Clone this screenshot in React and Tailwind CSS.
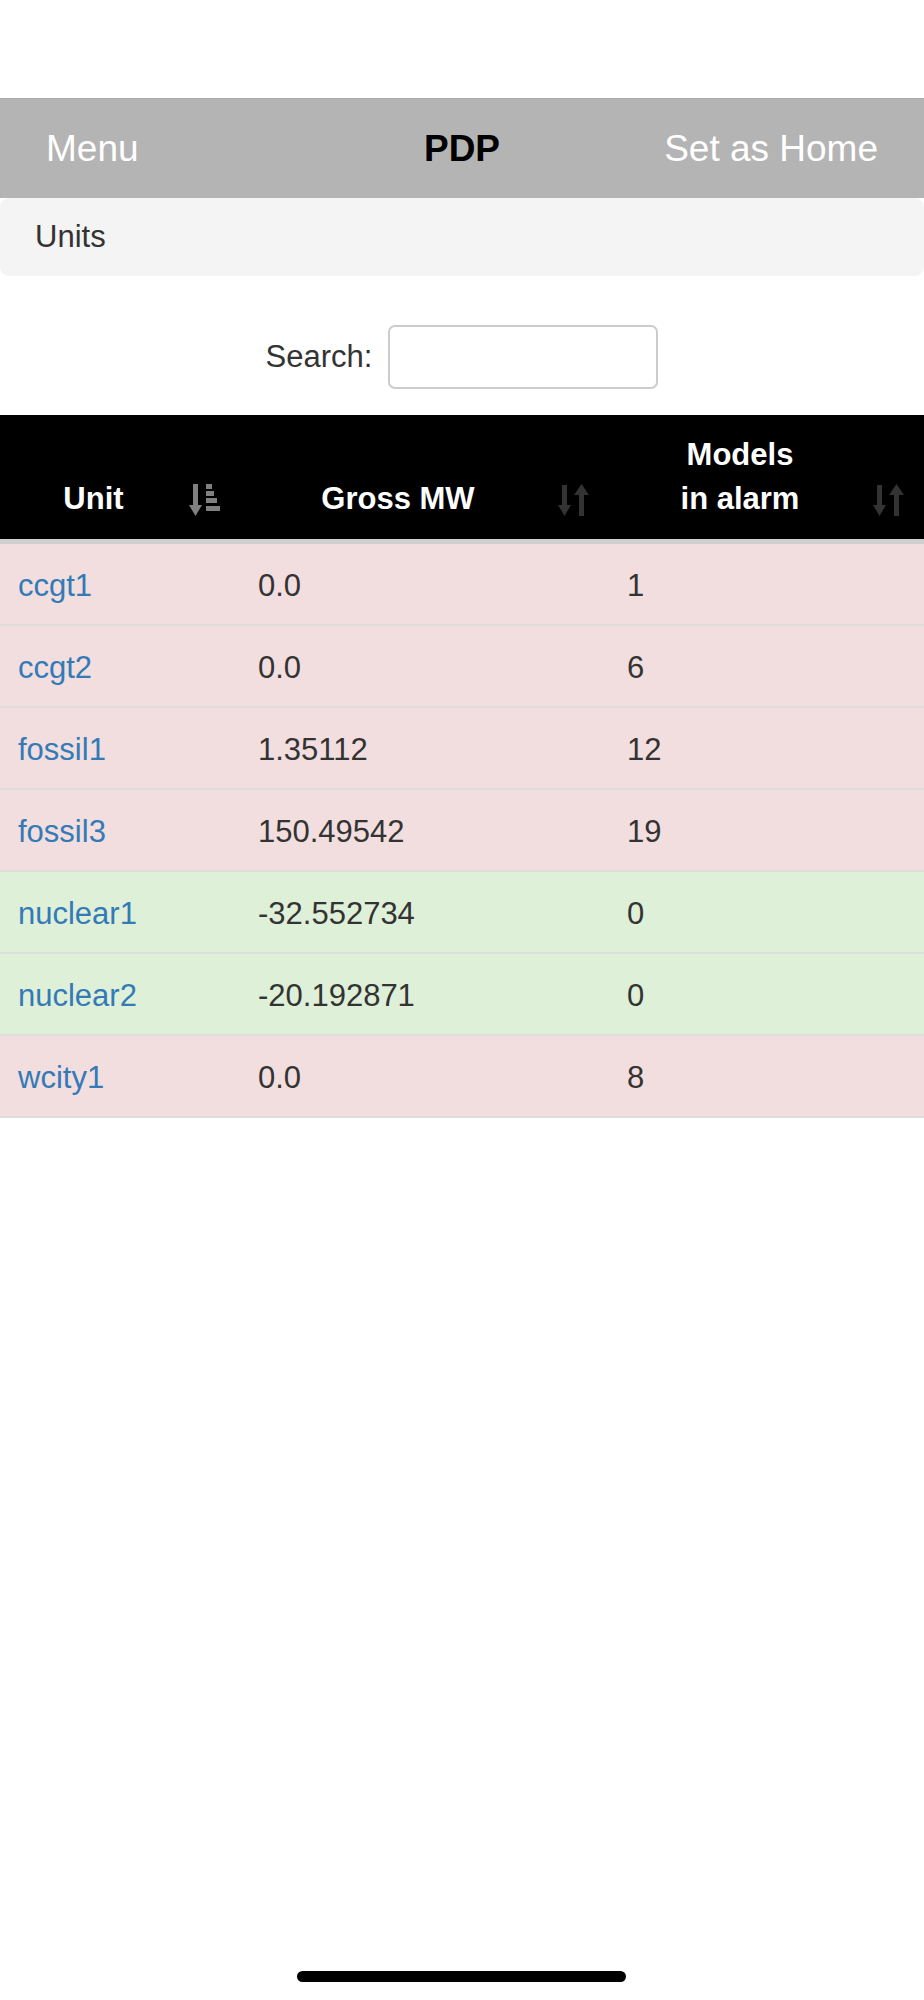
import React from "react";

const rows = [
  { unit: "ccgt1", mw: "0.0", alarms: "1", ok: false },
  { unit: "ccgt2", mw: "0.0", alarms: "6", ok: false },
  { unit: "fossil1", mw: "1.35112", alarms: "12", ok: false },
  { unit: "fossil3", mw: "150.49542", alarms: "19", ok: false },
  { unit: "nuclear1", mw: "-32.552734", alarms: "0", ok: true },
  { unit: "nuclear2", mw: "-20.192871", alarms: "0", ok: true },
  { unit: "wcity1", mw: "0.0", alarms: "8", ok: false },
];

function SortAsc() {
  return (
    <svg width="32" height="32" viewBox="0 0 32 32" fill="currentColor">
      <rect x="4" y="0" width="5" height="22" />
      <polygon points="0,21 13,21 6.5,32" />
      <rect x="17" y="0" width="6" height="5" />
      <rect x="17" y="7" width="8" height="5" />
      <rect x="17" y="14" width="11" height="5" />
      <rect x="17" y="22" width="14" height="5" />
    </svg>
  );
}

function SortBoth() {
  return (
    <svg width="32" height="32" viewBox="0 0 32 32" fill="currentColor">
      <rect x="4" y="1" width="5" height="21" />
      <polygon points="0,21 13,21 6.5,32" />
      <polygon points="16,11 31,11 23.5,0" />
      <rect x="21" y="10" width="5" height="22" />
    </svg>
  );
}

function Th({ children, icon }) {
  return (
    <th className="relative align-bottom text-center font-bold text-white pl-[18px] pr-[71px] py-[18px] leading-[44px]">
      {children}
      <span className="absolute right-[19px] bottom-[23px] flex">
        {icon === "asc" ? (
          <span className="text-[#808080] flex"><SortAsc /></span>
        ) : (
          <span className="text-[#333333] flex"><SortBoth /></span>
        )}
      </span>
    </th>
  );
}

export default function App() {
  return (
    <div
      className="relative min-h-[2000px] bg-white text-[#333333] pt-[98px]"
      style={{ fontFamily: '"Liberation Sans", Arial, Helvetica, sans-serif' }}
    >
      <header className="h-[100px] bg-[#b4b4b4] border-t border-[#aaaaaa] grid grid-cols-[1fr_auto_1fr] items-center px-[46px] text-[37px]">
        <span className="text-white justify-self-start">Menu</span>
        <span className="font-bold text-black">PDP</span>
        <span className="text-white justify-self-end">Set as Home</span>
      </header>

      <nav className="bg-[#f4f4f4] rounded-[9px] px-[35px] py-[17px] text-[31px] leading-[44px]">
        Units
      </nav>

      <div className="mt-[49px] flex items-center justify-center gap-[16px] text-[31px]">
        <label>Search:</label>
        <input
          type="text"
          className="w-[270px] h-[64px] border-2 border-[#cccccc] rounded-[7px] bg-white outline-none"
        />
      </div>

      <table className="mt-[26px] w-full table-fixed border-collapse text-[31px]">
        <colgroup>
          <col className="w-[240px]" />
          <col className="w-[369px]" />
          <col />
        </colgroup>
        <thead>
          <tr className="bg-black border-b-[5px] border-[#d0d0d0]">
            <Th icon="asc">Unit</Th>
            <Th>Gross MW</Th>
            <Th>
              Models
              <br />
              in alarm
            </Th>
          </tr>
        </thead>
        <tbody>
          {rows.map((r) => (
            <tr
              key={r.unit}
              className={`border-b-2 border-[#dddddd] ${r.ok ? "bg-[#dff0d8]" : "bg-[#f2dede]"}`}
            >
              <td className="pl-[18px] pt-[20px] pb-[16px] leading-[44px]">
                <a className="text-[#337ab7]" href="#">{r.unit}</a>
              </td>
              <td className="pl-[18px] pt-[20px] pb-[16px] leading-[44px]">{r.mw}</td>
              <td className="pl-[18px] pt-[20px] pb-[16px] leading-[44px]">{r.alarms}</td>
            </tr>
          ))}
        </tbody>
      </table>

      <div className="absolute left-[297px] top-[1971px] w-[329px] h-[11px] rounded-full bg-black" />
    </div>
  );
}
